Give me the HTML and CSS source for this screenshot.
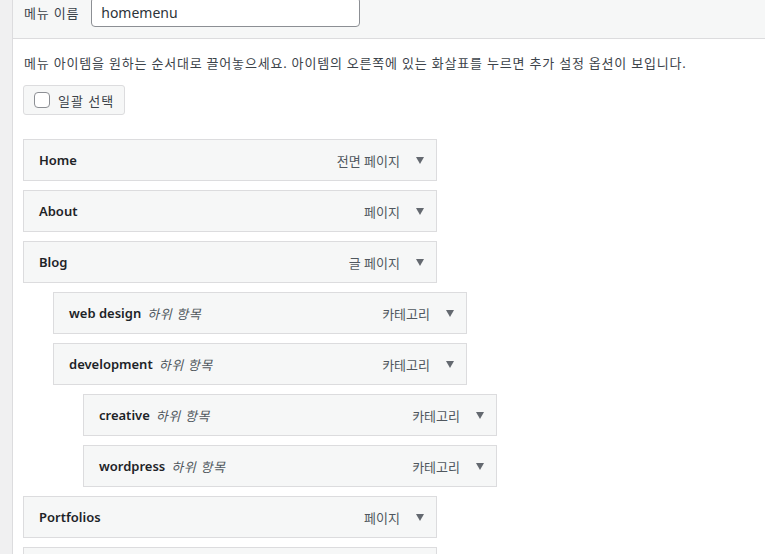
FILE: index.html
```html
<!DOCTYPE html>
<html>
    <head>
        <link rel="stylesheet" href="styles.css">
    </head>
    <body>
        <div class="page">
            <div class="sidebar"></div>
            <div class="main">
                <div class="menu-header">
                    <label class="menu-name-label" for="menuName">메뉴 이름</label>
                    <input class="menu-name" id="menuName" type="text" value="homemenu">
                </div>
                <div class="menu-body">
                    <p class="help">메뉴 아이템을 원하는 순서대로 끌어놓으세요. 아이템의 오른쪽에 있는 화살표를 누르면 추가 설정 옵션이 보입니다.</p>
                    <button class="bulk-select"><span class="check"></span>일괄 선택</button>
                    <ul class="menu-items">
                        <li class="item depth-0"><span class="title">Home</span><span class="type">전면 페이지</span><span class="arrow"></span></li>
                        <li class="item depth-0"><span class="title">About</span><span class="type">페이지</span><span class="arrow"></span></li>
                        <li class="item depth-0"><span class="title">Blog</span><span class="type">글 페이지</span><span class="arrow"></span></li>
                        <li class="item depth-1"><span class="title">web design</span><span class="sub">하위 항목</span><span class="type">카테고리</span><span class="arrow"></span></li>
                        <li class="item depth-1"><span class="title">development</span><span class="sub">하위 항목</span><span class="type">카테고리</span><span class="arrow"></span></li>
                        <li class="item depth-2"><span class="title">creative</span><span class="sub">하위 항목</span><span class="type">카테고리</span><span class="arrow"></span></li>
                        <li class="item depth-2"><span class="title">wordpress</span><span class="sub">하위 항목</span><span class="type">카테고리</span><span class="arrow"></span></li>
                        <li class="item depth-0"><span class="title">Portfolios</span><span class="type">페이지</span><span class="arrow"></span></li>
                        <li class="item depth-0"></li>
                    </ul>
                </div>
            </div>
        </div>
    </body>
</html>
```

FILE: styles.css
```css
html, body {
    margin: 0px;
    height: 100%;
    overflow: hidden;
}
body {
    background-color: white;
    font-family: "Noto Sans", "Noto Sans CJK KR", sans-serif;
    font-size: 13px;
    color: #3c434a;
}
.page {
    display: flex;
    min-height: 100%;
}
.sidebar {
    width: 12px;
    flex-shrink: 0;
    background-color: #f0f0f1;
    border-right: 1px solid #dcdcde;
}
.main {
    flex: 1;
}
.menu-header {
    display: flex;
    align-items: center;
    gap: 12px;
    height: 38px;
    padding-left: 11px;
    background-color: #f6f7f7;
    border-bottom: 1px solid #dcdcde;
    box-sizing: content-box;
}
.menu-name-label {
    margin-top: -14px;
    letter-spacing: 0.8px;
    color: #3c434a;
}
.menu-name {
    width: 269px;
    height: 30px;
    margin-top: -14px;
    padding: 0px 9px;
    box-sizing: border-box;
    border: 1px solid #8c8f94;
    border-radius: 4px;
    font-family: inherit;
    font-size: 14px;
    color: #2c3338;
    background-color: white;
}
.menu-body {
    padding: 0px 10px;
}
.help {
    margin: 14px 0px 0px 1px;
    line-height: 20px;
    letter-spacing: 0.8px;
}
.bulk-select {
    display: flex;
    align-items: center;
    gap: 8px;
    height: 30px;
    margin-top: 12px;
    padding: 0px 10px;
    background-color: #f6f7f7;
    border: 1px solid #dcdcde;
    border-radius: 3px;
    font-family: inherit;
    font-size: 13px;
    letter-spacing: 1px;
    color: #3c434a;
}
.check {
    width: 16px;
    height: 16px;
    box-sizing: border-box;
    border: 1px solid #8c8f94;
    border-radius: 4px;
    background-color: white;
}
.menu-items {
    list-style: none;
    margin: 24px 0px 0px 0px;
    padding: 0px;
    display: flex;
    flex-direction: column;
    gap: 9px;
}
.item {
    display: flex;
    align-items: center;
    width: 414px;
    height: 42px;
    flex-shrink: 0;
    box-sizing: border-box;
    padding: 0px 12px 0px 15px;
    background-color: #f6f7f7;
    border: 1px solid #dcdcde;
}
.depth-1 {
    margin-left: 30px;
}
.depth-2 {
    margin-left: 60px;
}
.title {
    font-weight: 600;
    color: #1d2327;
}
.sub {
    margin-left: 6px;
    font-style: italic;
    letter-spacing: 0.6px;
    color: #50575e;
}
.type {
    margin-left: auto;
    color: #50575e;
}
.arrow {
    width: 0px;
    height: 0px;
    margin-left: 16px;
    border-left: 4.5px solid transparent;
    border-right: 4.5px solid transparent;
    border-top: 7px solid #646970;
}
```
